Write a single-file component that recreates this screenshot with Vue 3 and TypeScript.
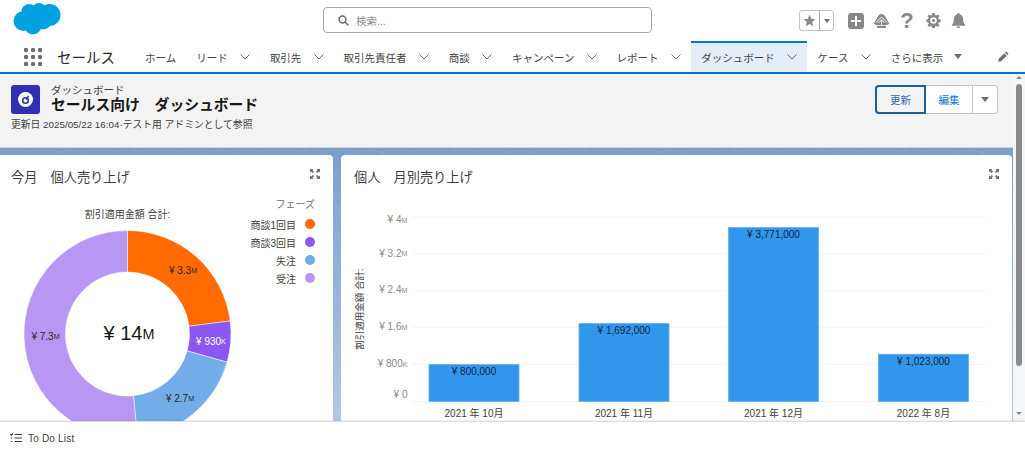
<template>
  <div class="app">
    <header class="top-bar">
      <svg class="logo" width="48" height="34" viewBox="0 0 48 34">
        <g fill="#00a1e0">
          <circle cx="10.500" cy="20" r="10" />
          <circle cx="16" cy="10.500" r="7.500" />
          <circle cx="26" cy="9.500" r="7.500" />
          <circle cx="36.500" cy="14" r="11" />
          <circle cx="20" cy="25" r="8.500" />
          <circle cx="30" cy="20" r="8.500" />
          <circle cx="22" cy="16" r="8" />
        </g>
      </svg>
      <div class="search">
        <svg width="11" height="11" viewBox="0 0 11 11" fill="none" stroke="#706e6b" stroke-width="1.500">
          <circle cx="4.500" cy="4.500" r="3.400" />
          <path d="M7 7l3.400 3.400" />
        </svg>
        <span>検索...</span>
      </div>
      <div class="global-actions">
        <div class="favorites">
          <span class="fav-star">
            <svg width="13" height="13" viewBox="0 0 24 24"><path fill="#8a8a8a" d="M12 1.500l3.200 7.200 7.800.8-5.900 5.200 1.700 7.800L12 18.500l-6.800 4 1.700-7.800L1 9.500l7.800-.8z" /></svg>
          </span>
          <span class="fav-menu"><i class="caret small"></i></span>
        </div>
        <svg class="plus" width="16" height="16" viewBox="0 0 16 16">
          <rect width="16" height="16" rx="3" fill="#888" />
          <path d="M8 3v10M3 8h10" stroke="#fff" stroke-width="2" />
        </svg>
        <svg class="trail" width="15" height="14" viewBox="0 0 15 14">
          <path fill="#888" d="M7.500 0c1.800 0 2.800 1 3.500 2.300l3.600 6.200c.7 1.300.2 2.100-1.100 2.300-3.800.7-8.200.7-12 0C.2 10.600-.3 9.800.4 8.500L4 2.300C4.700 1 5.700 0 7.500 0z" />
          <path fill="none" stroke="#fff" stroke-width="1" d="M2 8.500l5.500-5.500 5.500 5.500M4.500 8.800l3-3 3 3M7.500 5.800v5" />
          <path fill="#888" d="M2.500 12h10l-1 2h-8z" />
        </svg>
        <span class="help">?</span>
        <svg class="gear" width="15" height="15" viewBox="0 0 16 16">
          <path fill="#888" fill-rule="evenodd" d="M6.700 0h2.600l.4 2.100 1.300.6 1.800-1.100 1.600 1.900-1.300 1.600.5 1.400 2 .5v2.600l-2 .5-.5 1.400 1.300 1.600-1.600 1.900-1.800-1.100-1.300.6-.4 2.100H6.700l-.4-2.100-1.300-.6-1.800 1.100-1.600-1.900 1.300-1.600-.5-1.400-2-.5V6.900l2-.5.5-1.400-1.300-1.600 1.600-1.900L5 2.700l1.300-.6zM8 4.500a3.500 3.500 0 100 7 3.500 3.500 0 000-7z" />
          <circle cx="8" cy="8" r="1.700" fill="#888" />
        </svg>
        <svg class="bell" width="15" height="15" viewBox="0 0 16 16">
          <path fill="#888" d="M8 0c.8 0 1.300.6 1.300 1.300C11.600 2 13 4 13 6.500c0 3 .6 4.700 2 6 .3.400.1 1-.4 1H1.400c-.5 0-.7-.6-.4-1 1.400-1.300 2-3 2-6C3 4 4.400 2 6.700 1.300 6.700.6 7.200 0 8 0zM6 14.300h4A2 2 0 018 16a2 2 0 01-2-1.700z" />
        </svg>
      </div>
    </header>

    <nav class="nav-bar">
      <svg class="waffle" width="18" height="18" viewBox="0 0 18 18">
        <template v-for="cy in [2, 9, 16]" :key="cy">
          <circle v-for="cx in [2, 9, 16]" :key="cx" :cx="cx" :cy="cy" r="2.200" fill="#706e6b" />
        </template>
      </svg>
      <span class="app-name">セールス</span>
      <div class="tabs">
        <div v-for="tab in tabs" :key="tab.label" class="tab" :class="{ active: tab.active }">
          <span>{{ tab.label }}</span>
          <svg v-if="tab.menu" class="chevron" width="10" height="6" viewBox="0 0 10 6" fill="none" stroke="#706e6b" stroke-width="1">
            <path d="M.5.500L5 5l4.500-4.500" />
          </svg>
        </div>
        <div class="tab more">
          <span>さらに表示</span>
          <i class="caret"></i>
        </div>
      </div>
      <svg class="pencil" width="11" height="11" viewBox="0 0 11 11">
        <path fill="#706e6b" d="M8.200.4l2.400 2.400-1.200 1.200L7 1.600zM6.300 2.300l2.400 2.400-5.500 5.500L.2 10.800l.6-3z" />
      </svg>
    </nav>

    <div class="main">
      <div class="content">
        <section class="page-header">
          <div class="title-block">
            <div class="title-row">
              <div class="title-icon">
                <svg width="17" height="17" viewBox="0 0 17 17">
                  <circle cx="8.500" cy="8.500" r="7.500" fill="#fff" />
                  <circle cx="8.500" cy="9.500" r="2.800" fill="none" stroke="#3230b0" stroke-width="1.600" />
                  <path d="M9 8.500l2.600-3.500" stroke="#3230b0" stroke-width="1.600" />
                </svg>
              </div>
              <div>
                <div class="title-sub">ダッシュボード</div>
                <h1 class="title-main">セールス向け　ダッシュボード</h1>
              </div>
            </div>
            <div class="title-meta">更新日 2025/05/22 16:04·テスト用 アドミンとして参照</div>
          </div>
          <div class="buttons">
            <button class="btn refresh">更新</button>
            <button class="btn edit">編集</button>
            <button class="btn menu"><i class="caret"></i></button>
          </div>
        </section>

        <section class="board">
          <article class="card donut-card">
            <div class="card-head">
              <h2>今月　個人売り上げ</h2>
              <svg class="expand" width="10" height="10" viewBox="0 0 10 10"><path :d="expandPath" fill="#706e6b" /></svg>
            </div>
            <div class="donut-body">
              <div class="donut-col">
                <div class="chart-label">割引適用金額 合計:</div>
                <svg class="donut" width="255" height="215" viewBox="0 0 255 215">
                  <path v-for="s in slices" :key="s.name" :d="s.path" :fill="s.color" stroke="#fff" stroke-width="0.500" />
                  <text v-for="s in slices" :key="s.name + '-v'" :x="s.lx" :y="s.ly" class="slice-label" :fill="s.text">¥ {{ s.num }}<tspan class="unit">{{ s.unit }}</tspan></text>
                  <text x="129" y="108.500" class="donut-total">¥ 14<tspan class="unit">M</tspan></text>
                </svg>
              </div>
              <ul class="legend">
                <li class="legend-title">フェーズ</li>
                <li v-for="s in slices" :key="s.name" class="legend-row">
                  {{ s.name }}
                  <i :style="{ backgroundColor: s.color }"></i>
                </li>
              </ul>
            </div>
          </article>

          <article class="card bar-card">
            <div class="card-head">
              <h2>個人　月別売り上げ</h2>
              <svg class="expand" width="10" height="10" viewBox="0 0 10 10"><path :d="expandPath" fill="#706e6b" /></svg>
            </div>
            <svg class="bars" width="671" height="226" viewBox="0 0 671 226">
              <g v-for="t in ticks" :key="t.num">
                <line x1="71" x2="645" :y1="t.y" :y2="t.y" stroke="#f1f4f9" />
                <text x="66.500" :y="t.labelY" class="tick">¥ {{ t.num }}<tspan class="unit">{{ t.unit }}</tspan></text>
              </g>
              <text class="axis-title" transform="translate(19 110) rotate(-90)">割引適用金額 合計:</text>
              <g v-for="b in bars" :key="b.month">
                <rect :x="b.x" :y="b.y" width="90" :height="b.h" fill="#3296ed" stroke="#63afef" stroke-width="0.800" />
                <text :x="b.x + 45" :y="b.y + 8" class="bar-value">¥ {{ b.value.toLocaleString('en-US') }}</text>
                <text :x="b.x + 45" y="215" class="month">{{ b.month }}</text>
              </g>
            </svg>
          </article>
        </section>
      </div>
      <div class="scrollbar">
        <i class="arrow up"></i>
        <div class="thumb"></div>
        <i class="arrow down"></i>
      </div>
    </div>

    <footer class="utility-bar">
      <svg width="12" height="10" viewBox="0 0 12 10" fill="none" stroke="#3e3e3c" stroke-width="1.200">
        <path d="M4.500 1.500H12M4.500 5H12M4.500 8.500H12" />
        <path d="M.3 1.200l1 1L3 .3M.8 5h1.500M.8 8.500h1.500" />
      </svg>
      <span>To Do List</span>
    </footer>
  </div>
</template>

<script setup lang="ts">
interface Tab {
  label: string;
  menu: boolean;
  active?: boolean;
}

const tabs: Tab[] = [
  { label: 'ホーム', menu: false },
  { label: 'リード', menu: true },
  { label: '取引先', menu: true },
  { label: '取引先責任者', menu: true },
  { label: '商談', menu: true },
  { label: 'キャンペーン', menu: true },
  { label: 'レポート', menu: true },
  { label: 'ダッシュボード', menu: true, active: true },
  { label: 'ケース', menu: true },
];

const expandPath =
  'M0 0h3.500L2.400 1.100 4 2.700 2.700 4 1.100 2.400 0 3.500zM10 0v3.500L8.900 2.400 7.300 4 6 2.700 7.600 1.100 6.500 0zM0 10V6.500l1.100 1.100L2.700 6 4 7.300 2.400 8.900 3.500 10zM10 10H6.500l1.100-1.100L6 7.300 7.300 6 8.900 7.600 10 6.500z';

// ドーナツの座標 (svg内)
const CX = 127.5;
const CY = 108;
const R = 103.5;
const HOLE = 62;

function point(r: number, deg: number): string {
  const rad = (deg * Math.PI) / 180;
  return `${(CX + r * Math.sin(rad)).toFixed(2)} ${(CY - r * Math.cos(rad)).toFixed(2)}`;
}

function arc(from: number, to: number): string {
  const large = to - from > 180 ? 1 : 0;
  return `M${point(R, from)}A${R} ${R} 0 ${large} 1 ${point(R, to)}L${point(HOLE, to)}A${HOLE} ${HOLE} 0 ${large} 0 ${point(HOLE, from)}Z`;
}

const slices = [
  { name: '商談1回目', color: '#ff6b00', text: '#2b2826', from: 0, to: 82.8, num: '3.3', unit: 'M', lx: 183, ly: 45 },
  { name: '商談3回目', color: '#8b57f0', text: '#ffffff', from: 82.8, to: 105.8, num: '930', unit: 'K', lx: 211, ly: 116 },
  { name: '失注', color: '#73ade9', text: '#2b2826', from: 105.8, to: 174.5, num: '2.7', unit: 'M', lx: 180, ly: 173 },
  { name: '受注', color: '#b897f4', text: '#2b2826', from: 174.5, to: 360, num: '7.3', unit: 'M', lx: 45.5, ly: 111 },
].map((s) => ({ ...s, path: arc(s.from, s.to) }));

// 棒グラフのスケール
const BASE = 202.4;
const SCALE = 184.4 / 4000000;

const ticks = [
  { num: '4', unit: 'M', value: 4000000, shift: 3.5 },
  { num: '3.2', unit: 'M', value: 3200000, shift: 0 },
  { num: '2.4', unit: 'M', value: 2400000, shift: 0 },
  { num: '1.6', unit: 'M', value: 1600000, shift: 0 },
  { num: '800', unit: 'K', value: 800000, shift: 0 },
  { num: '0', unit: '', value: 0, shift: -6 },
].map((t) => {
  const y = BASE - t.value * SCALE;
  return { ...t, y, labelY: y + t.shift };
});

const bars = [
  { month: '2021 年 10月', value: 800000, x: 88 },
  { month: '2021 年 11月', value: 1692000, x: 238 },
  { month: '2021 年 12月', value: 3771000, x: 387.5 },
  { month: '2022 年 8月', value: 1023000, x: 537.5 },
].map((b) => {
  const h = b.value * SCALE;
  return { ...b, h, y: BASE - h };
});
</script>

<style>
html,
body {
  margin: 0;
  overflow: hidden;
}
</style>

<style scoped>
.app {
  width: 1025px;
  height: 454px;
  display: flex;
  flex-direction: column;
  overflow: hidden;
  background: #fff;
  color: #3e3e3c;
  font-family: 'Liberation Sans', 'Noto Sans CJK JP', sans-serif;
  font-size: 10px;
}

.top-bar {
  height: 41px;
  flex-shrink: 0;
  display: flex;
  align-items: center;
  padding: 0 59px 0 13px;
  box-sizing: border-box;
}

.logo {
  margin-top: -1px;
  margin-bottom: 4px;
}

.search {
  width: 329px;
  height: 26px;
  box-sizing: border-box;
  margin-left: 262px;
  margin-top: -1px;
  display: flex;
  align-items: center;
  gap: 7px;
  padding-left: 14px;
  border: 1px solid #a8a8a8;
  border-radius: 4px;
  color: #8a8a8a;
  font-size: 10.5px;
}

.global-actions {
  display: flex;
  align-items: center;
  margin-left: auto;
}

.favorites {
  display: flex;
  width: 35px;
  height: 21px;
  box-sizing: border-box;
  border: 1px solid #c4c4c4;
  border-radius: 3px;
  margin-right: 14px;
}

.fav-star {
  flex: 1;
  display: flex;
  align-items: center;
  justify-content: center;
  border-right: 1px solid #a8a8a8;
}

.fav-menu {
  width: 13px;
  display: flex;
  align-items: center;
  justify-content: center;
}

.trail {
  margin-left: 10px;
}

.help {
  width: 16px;
  text-align: center;
  margin-left: 10px;
  font-size: 22px;
  line-height: 20px;
  font-weight: 700;
  color: #888;
  font-family: 'Liberation Sans', sans-serif;
}

.gear {
  margin-left: 11px;
}

.bell {
  margin-left: 10px;
}

.caret {
  display: inline-block;
  flex-shrink: 0;
  width: 0;
  height: 0;
  border-left: 4.5px solid transparent;
  border-right: 4.5px solid transparent;
  border-top: 5.5px solid #706e6b;
}

.caret.small {
  border-left-width: 3.5px;
  border-right-width: 3.5px;
  border-top-width: 4px;
}

.nav-bar {
  height: 33px;
  flex-shrink: 0;
  box-sizing: border-box;
  display: flex;
  align-items: stretch;
  border-bottom: 2px solid #0176d3;
  padding-left: 24px;
  font-size: 10.5px;
}

.waffle {
  align-self: center;
}

.app-name {
  align-self: center;
  margin-left: 15px;
  width: 78px;
  font-size: 14.5px;
  color: #2b2826;
}

.tabs {
  display: flex;
  align-items: stretch;
}

.tab {
  display: flex;
  align-items: center;
  padding: 1px 10px 0;
  color: #444;
}

.tab.active {
  padding: 0 10.5px 1px;
  background: #e5eef8;
  border-top: 2px solid #0176d3;
}

.chevron {
  margin-left: 12.2px;
}

.tab.more .caret {
  margin-left: 11px;
  margin-top: -2px;
}

.pencil {
  align-self: center;
  margin-left: 26px;
}

.main {
  flex: 1;
  min-height: 0;
  display: flex;
}

.content {
  flex: 1;
  min-width: 0;
  overflow: hidden;
}

.page-header {
  height: 74px;
  box-sizing: border-box;
  display: flex;
  justify-content: space-between;
  padding: 11px 15px 0 11px;
  background: #f3f3f3;
  border-bottom: 1px solid #d4d4d4;
}

.title-row {
  display: flex;
  gap: 11px;
}

.title-icon {
  width: 29px;
  height: 29px;
  border-radius: 3px;
  background: #3230b0;
  display: flex;
  align-items: center;
  justify-content: center;
}

.title-sub {
  font-size: 10.5px;
  line-height: 11px;
  color: #3e3e3c;
}

.title-main {
  margin: 0;
  font-size: 14.8px;
  line-height: 19px;
  font-weight: 700;
  color: #181818;
}

.title-meta {
  margin-top: 2px;
  font-size: 9.8px;
  line-height: 15px;
  color: #3e3e3c;
}

.buttons {
  display: flex;
  height: 29px;
}

.btn {
  box-sizing: border-box;
  height: 29px;
  padding: 0;
  border: 1px solid #c4c4c4;
  background: #fff;
  font: inherit;
  font-size: 10.5px;
  color: #0176d3;
  display: flex;
  align-items: center;
  justify-content: center;
}

.btn.refresh {
  width: 51px;
  background: #f3f3f3;
  color: #3f6ea8;
  border: 2px solid #1b5e9e;
  border-radius: 4px 0 0 4px;
}

.btn.edit {
  width: 47px;
  border-left: none;
}

.btn.menu {
  width: 25px;
  border-left: none;
  border-radius: 0 4px 4px 0;
}

/* 背景の模様は薄い円の繰り返し */
.board {
  display: grid;
  grid-template-columns: 333px 671px;
  gap: 8px;
  padding-top: 7px;
  height: 100%;
  background:
    repeating-radial-gradient(circle at 70px 40px, transparent 0 18px, rgba(255, 255, 255, 0.07) 18px 19px) 0 0 / 150px 90px,
    linear-gradient(#7a9fc9, #b2c8e4 272px);
}

.card {
  height: 290px;
  background: #fff;
  border-radius: 0 4px 4px 0;
}

.bar-card {
  border-radius: 4px;
}

.card-head {
  height: 44px;
  box-sizing: border-box;
  display: flex;
  justify-content: space-between;
  padding: 14px 13px 0 11px;
}

.bar-card .card-head {
  padding-left: 13px;
}

.card-head h2 {
  margin: 1px 0 0;
  font-size: 13.2px;
  line-height: 16px;
  font-weight: 400;
  color: #3e3e3c;
}

.donut-body {
  display: flex;
}

.donut-col {
  width: 255px;
  flex: none;
}

.chart-label {
  text-align: center;
  line-height: 14px;
  margin-top: 9px;
  margin-bottom: 4px;
  color: #3e3e3c;
}

.donut {
  display: block;
}

.legend {
  flex: 1;
  list-style: none;
  margin: -1px 18px 0 -10px;
  padding: 0;
  text-align: right;
  white-space: nowrap;
  color: #3e3e3c;
}

.legend-title {
  height: 14px;
  line-height: 14px;
  margin-bottom: 3px;
  color: #706e6b;
}

.legend-row {
  height: 18px;
  display: flex;
  align-items: center;
  justify-content: flex-end;
  gap: 9px;
}

.legend-row i {
  width: 10px;
  height: 10px;
  border-radius: 50%;
}

.slice-label,
.bar-value,
.month {
  text-anchor: middle;
  dominant-baseline: middle;
  font-size: 10px;
}

.bar-value {
  fill: #16233d;
}

.month {
  fill: #3e3e3c;
}

.donut-total {
  text-anchor: middle;
  dominant-baseline: middle;
  font-size: 20px;
  fill: #181818;
}

.unit {
  font-size: 0.72em;
}

.bars {
  display: block;
}

.tick {
  text-anchor: end;
  dominant-baseline: middle;
  font-size: 10px;
  fill: #8a8a8a;
}

.axis-title {
  text-anchor: middle;
  dominant-baseline: middle;
  font-size: 9.5px;
  fill: #3e3e3c;
}

.scrollbar {
  width: 12px;
  flex-shrink: 0;
  display: flex;
  flex-direction: column;
  align-items: center;
  background: #f6f6f6;
  padding-top: 2px;
  box-sizing: border-box;
}

.thumb {
  width: 6px;
  height: 282px;
  margin-top: 5px;
  margin-bottom: 46px;
  border-radius: 3px;
  background: #8a8a8a;
}

.arrow {
  width: 0;
  height: 0;
  border-left: 3px solid transparent;
  border-right: 3px solid transparent;
}

.arrow.up {
  border-bottom: 3px solid #8a8a8a;
}

.arrow.down {
  border-top: 3px solid #8a8a8a;
}

.utility-bar {
  height: 33px;
  flex-shrink: 0;
  box-sizing: border-box;
  display: flex;
  align-items: center;
  gap: 6px;
  padding-left: 10px;
  background: #fff;
  border-top: 1px solid #dcdcdc;
  box-shadow: 0 -1px 2px rgba(0, 0, 0, 0.08);
  position: relative;
  letter-spacing: 0.2px;
}
</style>
